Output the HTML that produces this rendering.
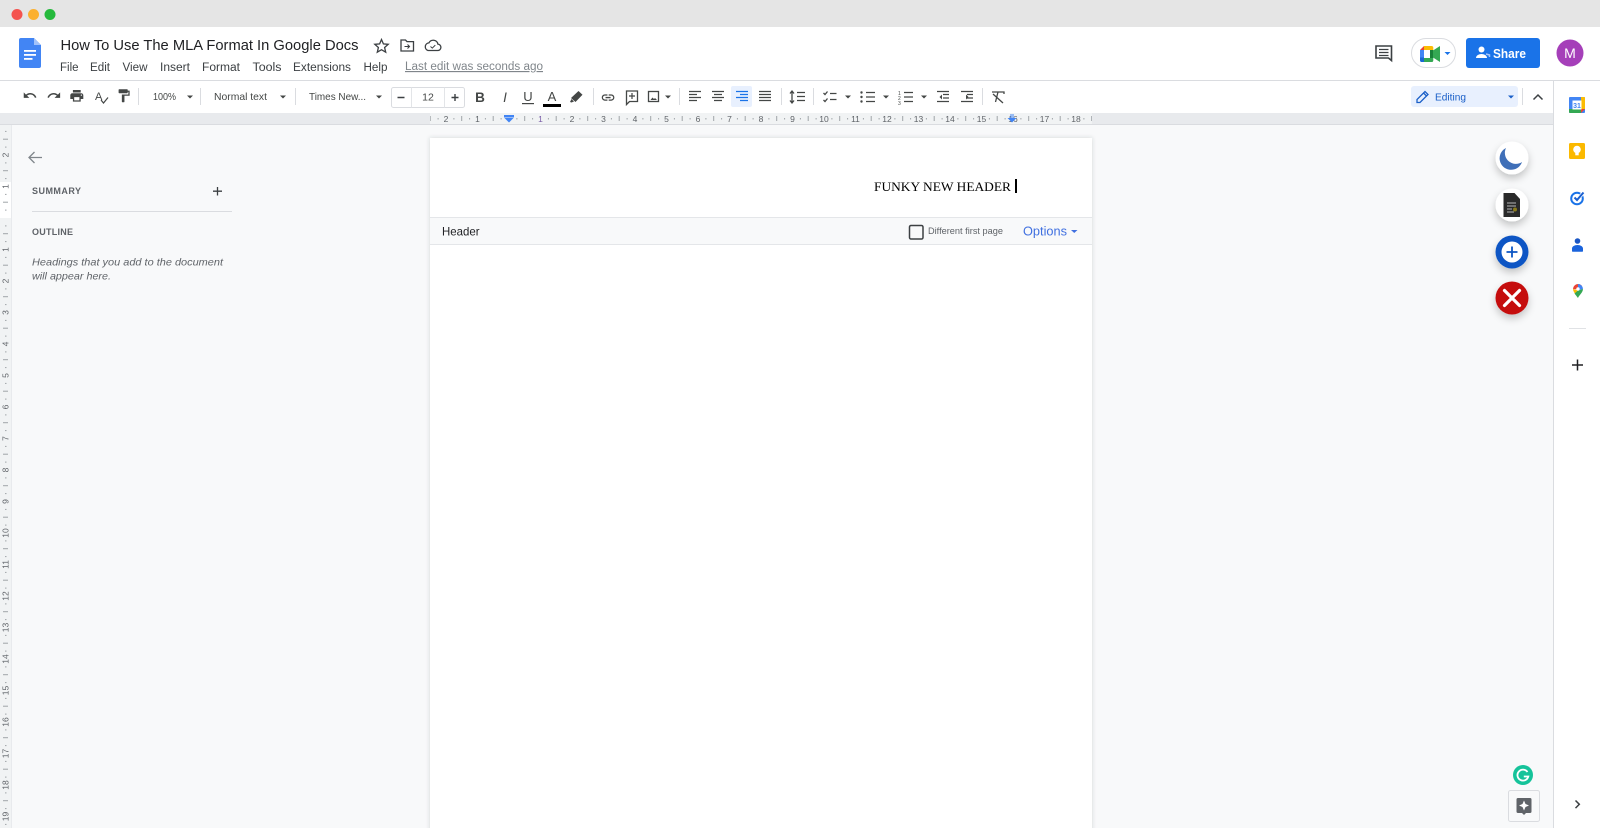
<!DOCTYPE html>
<html><head><meta charset="utf-8"><title>How To Use The MLA Format In Google Docs</title>
<style>html,body{margin:0;padding:0;background:#f8f9fa;overflow:hidden}svg{display:block;filter:blur(.3px)}text{font-family:"Liberation Sans",Arial,sans-serif}</style></head>
<body>
<svg xmlns="http://www.w3.org/2000/svg" width="1600" height="828" viewBox="0 0 1600 828">
<defs>
<filter id="s" x="-60%" y="-60%" width="220%" height="240%"><feDropShadow dx="0" dy="4" stdDeviation="4" flood-color="#000" flood-opacity=".22"/></filter>
<filter id="p" x="-3%" y="-3%" width="106%" height="106%"><feDropShadow dx="0" dy="0" stdDeviation="2" flood-color="#3c4043" flood-opacity=".2"/></filter>
<pattern id="rh" patternUnits="userSpaceOnUse" x="509" y="113" width="31.5" height="11">
<rect x="15.2" y="3" width="1" height="5" fill="#a0a4a8"/><rect x="7.4" y="5" width="1" height="1.5" fill="#a0a4a8"/><rect x="23.1" y="5" width="1" height="1.5" fill="#a0a4a8"/>
</pattern>
<pattern id="rv" patternUnits="userSpaceOnUse" x="0" y="218" width="11" height="31.5">
<rect x="3" y="15.2" width="5" height="1" fill="#a0a4a8"/><rect x="5" y="7.4" width="1.5" height="1" fill="#a0a4a8"/><rect x="5" y="23.1" width="1.5" height="1" fill="#a0a4a8"/>
</pattern>
</defs>

<rect width="1600" height="828" fill="#f8f9fa"/>
<!-- window chrome -->
<rect width="1600" height="27" fill="#e5e5e5"/>
<circle cx="17" cy="14.5" r="5.5" fill="#f4534f"/><circle cx="33.5" cy="14.5" r="5.5" fill="#fbb030"/><circle cx="50" cy="14.5" r="5.5" fill="#25b93c"/>
<!-- header -->
<rect y="27" width="1600" height="53" fill="#fff"/>
<rect y="80" width="1600" height="1" fill="#dadce0"/>
<path d="M21 38h13l7 7v21a2 2 0 0 1-2 2H21a2 2 0 0 1-2-2V40a2 2 0 0 1 2-2z" fill="#4285f4"/>
<path d="M34 38l7 7h-7z" fill="#a1c2fa"/>
<rect x="24" y="50" width="12" height="1.8" fill="#fff"/><rect x="24" y="54" width="12" height="1.8" fill="#fff"/><rect x="24" y="58" width="8.5" height="1.8" fill="#fff"/>
<text x="60.5" y="50" font-size="15" fill="#202124" textLength="298" lengthAdjust="spacingAndGlyphs">How To Use The MLA Format In Google Docs</text>
<path d="M381.5 39.5l1.9 4.4 4.8.4-3.6 3.2 1.1 4.7-4.2-2.5-4.2 2.5 1.1-4.7-3.6-3.2 4.8-.4z" fill="none" stroke="#3c4043" stroke-width="1.3"/>
<path d="M401 40h4.5l1.5 1.6h6.5v9.4H401z" fill="none" stroke="#3c4043" stroke-width="1.3"/><path d="M404.5 46.5h5M407.5 44.5l2 2-2 2" fill="none" stroke="#3c4043" stroke-width="1.1"/>
<path d="M428 50.5h9.5a3.2 3.2 0 0 0 .4-6.4 4.8 4.8 0 0 0-9-1.2 3.9 3.9 0 0 0-.9 7.6z" fill="none" stroke="#3c4043" stroke-width="1.3"/><path d="M430.5 46.5l1.8 1.6 3-3" fill="none" stroke="#3c4043" stroke-width="1"/>
<g font-size="11.5" fill="#3c4043">
<text x="60" y="71" textLength="18.5" lengthAdjust="spacingAndGlyphs">File</text>
<text x="90" y="71" textLength="20" lengthAdjust="spacingAndGlyphs">Edit</text>
<text x="122.5" y="71" textLength="25" lengthAdjust="spacingAndGlyphs">View</text>
<text x="160" y="71" textLength="30" lengthAdjust="spacingAndGlyphs">Insert</text>
<text x="202" y="71" textLength="38" lengthAdjust="spacingAndGlyphs">Format</text>
<text x="252.5" y="71" textLength="29" lengthAdjust="spacingAndGlyphs">Tools</text>
<text x="293" y="71" textLength="58" lengthAdjust="spacingAndGlyphs">Extensions</text>
<text x="363.5" y="71" textLength="24" lengthAdjust="spacingAndGlyphs">Help</text>
</g>
<text x="405" y="70" font-size="11.5" fill="#80868b" text-decoration="underline" textLength="138" lengthAdjust="spacingAndGlyphs">Last edit was seconds ago</text>
<!-- comment icon -->
<path d="M1376 46h15.5v14.5l-3-2.5H1376z" fill="none" stroke="#3c4043" stroke-width="1.6"/><path d="M1379 49.5h9.5M1379 52.5h9.5M1379 55.5h9.5" stroke="#3c4043" stroke-width="1.2"/>
<!-- meet -->
<rect x="1411.5" y="38.5" width="44" height="29" rx="14.5" fill="#fff" stroke="#dadce0"/>
<path d="M1424 46l-4 4h4z" fill="#ea4335"/><path d="M1424 46h7.5a1.8 1.8 0 0 1 1.8 1.8V50h-9.3z" fill="#fbbc04"/>
<rect x="1420" y="50" width="4" height="7.5" fill="#4285f4"/><path d="M1420 57.5h4V62h-2.2a1.8 1.8 0 0 1-1.8-1.8z" fill="#1967d2"/>
<path d="M1424 58h9.3v2.2a1.8 1.8 0 0 1-1.8 1.8H1424z" fill="#34a853"/>
<rect x="1424" y="50" width="6" height="8" fill="#fff"/>
<rect x="1430" y="50" width="3.3" height="8" fill="#188038"/><path d="M1433 50.5l7-4.5v16l-7-4.5z" fill="#34a853"/>
<path d="M1444.5 52h6l-3 3z" fill="#1a73e8"/>
<!-- share -->
<rect x="1466" y="38" width="74" height="30" rx="3" fill="#1a73e8"/>
<circle cx="1481.5" cy="49.5" r="3" fill="#fff"/><path d="M1476 58c0-2.6 3-4 5.500-4s5.500 1.400 5.500 4z" fill="#fff"/><path d="M1486 54l3.500 1v2" stroke="#a8c7fa" stroke-width="1.500" fill="none"/>
<text x="1493" y="58" font-size="12.500" font-weight="700" fill="#fff" textLength="33" lengthAdjust="spacingAndGlyphs">Share</text>
<circle cx="1570" cy="53" r="13.500" fill="#a53fb9"/><text x="1570" y="58" font-size="14" fill="#fff" text-anchor="middle">M</text>

<!-- toolbar -->
<rect y="81" width="1553" height="32" fill="#fff"/>
<g fill="#444746">
<path transform="translate(22.500 88) scale(.62)" d="M12.500 8c-2.650 0-5.050.99-6.900 2.600L2 7v9h9l-3.620-3.620c1.390-1.160 3.160-1.880 5.120-1.880 3.540 0 6.550 2.310 7.600 5.500l2.370-.78C21.080 11.030 17.150 8 12.500 8z"/>
<path transform="translate(46.500 88) scale(.62)" d="M18.400 10.600C16.550 8.990 14.150 8 11.500 8c-4.650 0-8.580 3.030-9.960 7.220L3.900 16c1.050-3.190 4.050-5.500 7.600-5.500 1.950 0 3.730.72 5.120 1.880L13 16h9V7l-3.600 3.600z"/>
<path transform="translate(69 88) scale(.65)" d="M19 8H5c-1.660 0-3 1.340-3 3v6h4v4h12v-4h4v-6c0-1.660-1.340-3-3-3zm-3 11H8v-5h8v5zm3-7c-.55 0-1-.45-1-1s.45-1 1-1 1 .45 1 1-.45 1-1 1zm-1-9H6v4h12V3z"/>
<path transform="translate(116 88) scale(.65)" d="M18 4V3c0-.55-.45-1-1-1H5c-.55 0-1 .45-1 1v4c0 .55.45 1 1 1h12c.55 0 1-.45 1-1V6h1v4H9v11c0 .55.45 1 1 1h2c.55 0 1-.45 1-1v-9h8V4h-3z"/>
</g>
<text x="95" y="100" font-size="11" fill="#444746">A</text><path d="M101 100l2.500 3 4.500-5.500" fill="none" stroke="#444746" stroke-width="1.200"/>
<g fill="#dadce0">
<rect x="138" y="88" width="1" height="17"/><rect x="200" y="88" width="1" height="17"/><rect x="295" y="88" width="1" height="17"/>
<rect x="593" y="88" width="1" height="17"/><rect x="679" y="88" width="1" height="17"/><rect x="781" y="88" width="1" height="17"/><rect x="813" y="88" width="1" height="17"/><rect x="982" y="88" width="1" height="17"/><rect x="1522" y="88" width="1" height="17"/>
</g>
<g font-size="10.500" fill="#444746">
<text x="153" y="100" textLength="23" lengthAdjust="spacingAndGlyphs">100%</text>
<text x="214" y="100" textLength="53" lengthAdjust="spacingAndGlyphs">Normal text</text>
<text x="309" y="100" textLength="57" lengthAdjust="spacingAndGlyphs">Times New...</text>
<text x="428" y="100.500" text-anchor="middle" font-size="10.500">12</text>
</g>
<g fill="#444746">
<path d="M187 95.500h6l-3 3zM280 95.500h6l-3 3zM376 95.500h6l-3 3zM665 95.500h6l-3 3zM845 95.500h6l-3 3zM883 95.500h6l-3 3zM921 95.500h6l-3 3z"/>
</g>
<rect x="391.500" y="87.500" width="73" height="20" rx="2" fill="none" stroke="#dadce0"/>
<path d="M411.500 87.500v20M444.500 87.500v20" stroke="#e3e5e8"/>
<path d="M397.500 97.500h7M451.500 97.500h7M455 94v7" stroke="#3c4043" stroke-width="1.400"/>
<text x="480" y="102" font-size="13.500" font-weight="700" fill="#444746" text-anchor="middle">B</text>
<text x="505" y="102" font-size="13.500" font-style="italic" fill="#444746" text-anchor="middle">I</text>
<text x="528" y="101" font-size="13" fill="#444746" text-anchor="middle">U</text><rect x="522" y="103" width="12" height="1.200" fill="#444746"/>
<text x="552" y="101" font-size="13" fill="#444746" text-anchor="middle">A</text><rect x="543" y="104" width="18" height="3" fill="#000"/>
<path d="M571 98l7.500-7 4 3.800-7 7.200z M570 102l1.500-3 2.500 2.500-2.500 1z" fill="#444746"/>
<path fill="#444746" transform="translate(600.500 90) scale(.63)" d="M3.900 12c0-1.710 1.390-3.100 3.100-3.100h4V7H7c-2.760 0-5 2.240-5 5s2.240 5 5 5h4v-1.900H7c-1.710 0-3.100-1.390-3.100-3.100zM8 13h8v-2H8v2zm9-6h-4v1.900h4c1.710 0 3.100 1.390 3.100 3.100s-1.390 3.100-3.100 3.100h-4V17h4c2.760 0 5-2.240 5-5s-2.240-5-5-5z"/>
<path d="M626.500 91h11v10.500h-8l-3 3z" fill="none" stroke="#444746" stroke-width="1.300"/><path d="M632 93v6M629 96h6" stroke="#444746" stroke-width="1.200"/>
<rect x="648.500" y="91.500" width="10" height="10" fill="none" stroke="#444746" stroke-width="1.300"/><path d="M650.500 100l2-2.500 1.500 1.500 1-1 2 2z" fill="#444746"/>
<g stroke="#444746" stroke-width="1.300" fill="none">
<path d="M689 91.500h12M689 94.500h8M689 97.500h12M689 100.500h8"/>
<path d="M712 91.500h12M714 94.500h8M712 97.500h12M714 100.500h8"/>
<path d="M759 91.500h12M759 94.500h12M759 97.500h12M759 100.500h12"/>
<path d="M792 91.500v11M790 93.500l2-2.500 2 2.500M790 100.500l2 2.500 2-2.500M797 92.500h8M797 96.500h8M797 100.500h8"/>
<path d="M823.500 93l1.500 1.500 2.500-3M823.500 100l1.500 1.500 2.500-3M830 93.500h6.500M830 99.500h6.500"/>
<path d="M866 92.500h9M866 97h9M866 101.500h9"/>
<path d="M904 92.500h9M904 97h9M904 101.500h9"/>
<path d="M937 91.500h12M943 94.500h6M943 98h6M937 101.500h12"/>
<path d="M961 91.500h12M967 94.500h6M967 98h6M961 101.500h12"/>
<path d="M992 92h12v2M998 92l-2.500 10M993 94l10 9"/>
</g>
<rect x="731" y="86" width="21" height="21" rx="2" fill="#e8f0fe"/>
<path d="M736 91.500h12M740 94.500h8M736 97.500h12M740 100.500h8" stroke="#1a73e8" stroke-width="1.300" fill="none"/>
<g fill="#444746"><circle cx="861.500" cy="92.500" r="1.200"/><circle cx="861.500" cy="97" r="1.200"/><circle cx="861.500" cy="101.500" r="1.200"/>
<path d="M937 94.500v5l-2.500-2.500zM961 94.500v5l2.500-2.500z" transform="translate(5 0)"/></g>
<text x="898" y="95" font-size="5" fill="#444746">1</text><text x="898" y="100" font-size="5" fill="#444746">2</text><text x="898" y="105" font-size="5" fill="#444746">3</text>
<!-- editing -->
<rect x="1411" y="86" width="107" height="21" rx="3" fill="#e8f0fe"/>
<path d="M1417 102.500v-3l8-8 3 3-8 8zM1423.500 93l3 3" fill="none" stroke="#1a5fc8" stroke-width="1.300"/>
<text x="1435" y="100.500" font-size="10.500" fill="#1a5fc8" textLength="31" lengthAdjust="spacingAndGlyphs">Editing</text>
<path d="M1508 95.500h6l-3 3z" fill="#1a5fc8"/>
<path d="M1533.500 99.500l4.500-4.500 4.500 4.500" fill="none" stroke="#3c4043" stroke-width="1.500"/>

<!-- horizontal ruler -->
<rect y="113" width="1553" height="11" fill="#e8eaed"/>
<rect x="430" y="113" width="662" height="11" fill="#f1f3f4"/>
<rect x="430" y="113" width="662" height="11" fill="url(#rh)"/>
<rect y="124" width="1553" height="1" fill="#dadce0"/>
<g font-size="8.500" fill="#5f6368" text-anchor="middle">
<text x="446" y="122">2</text><text x="477.500" y="122">1</text><text x="540.500" y="122" fill="#7a5ea8">1</text><text x="572" y="122">2</text><text x="603.500" y="122">3</text><text x="635" y="122">4</text><text x="666.500" y="122">5</text><text x="698" y="122">6</text><text x="729.500" y="122">7</text><text x="761" y="122">8</text><text x="792.500" y="122">9</text><text x="824" y="122">10</text><text x="855.500" y="122">11</text><text x="887" y="122">12</text><text x="918.500" y="122">13</text><text x="950" y="122">14</text><text x="981.500" y="122">15</text><text x="1013" y="122">16</text><text x="1044.500" y="122">17</text><text x="1076" y="122">18</text>
</g>
<path d="M504 115h10v2.500h-10zM504.500 118h9l-4.500 4.500z" fill="#4285f4"/>
<path d="M1007.500 118h9l-4.500 4.500z" fill="#4285f4"/><rect x="1010" y="114" width="4" height="4" fill="#4285f4" opacity=".5"/>

<!-- vertical ruler -->
<rect y="125" width="11" height="703" fill="#f1f3f4"/>
<rect y="182" width="11" height="36" fill="#fff"/>
<rect y="125" width="11" height="703" fill="url(#rv)"/>
<rect x="11" y="125" width="1" height="703" fill="#e8eaed"/>
<g font-size="8.500" fill="#5f6368" text-anchor="middle">
<text transform="translate(8.500 155) rotate(-90)">2</text><text transform="translate(8.500 186.500) rotate(-90)">1</text><text transform="translate(8.500 249.500) rotate(-90)">1</text><text transform="translate(8.500 281) rotate(-90)">2</text><text transform="translate(8.500 312.500) rotate(-90)">3</text><text transform="translate(8.500 344) rotate(-90)">4</text><text transform="translate(8.500 375.500) rotate(-90)">5</text><text transform="translate(8.500 407) rotate(-90)">6</text><text transform="translate(8.500 438.500) rotate(-90)">7</text><text transform="translate(8.500 470) rotate(-90)">8</text><text transform="translate(8.500 501.500) rotate(-90)">9</text><text transform="translate(8.500 533) rotate(-90)">10</text><text transform="translate(8.500 564.500) rotate(-90)">11</text><text transform="translate(8.500 596) rotate(-90)">12</text><text transform="translate(8.500 627.500) rotate(-90)">13</text><text transform="translate(8.500 659) rotate(-90)">14</text><text transform="translate(8.500 690.500) rotate(-90)">15</text><text transform="translate(8.500 722) rotate(-90)">16</text><text transform="translate(8.500 753.500) rotate(-90)">17</text><text transform="translate(8.500 785) rotate(-90)">18</text><text transform="translate(8.500 816.500) rotate(-90)">19</text>
</g>

<!-- outline panel -->
<path d="M42 157.500H29M34.500 152l-5.500 5.500 5.500 5.500" fill="none" stroke="#80868b" stroke-width="1.300"/>
<text x="32" y="194" font-size="9" font-weight="700" fill="#5f6368" textLength="49">SUMMARY</text>
<path d="M217.500 187v8.500M213 191.200h9" stroke="#3c4043" stroke-width="1.300"/>
<rect x="32" y="211" width="200" height="1" fill="#dadce0"/>
<text x="32" y="235" font-size="9" font-weight="700" fill="#5f6368" textLength="41">OUTLINE</text>
<text x="32" y="265.500" font-size="10.500" font-style="italic" fill="#5f6368" textLength="191" lengthAdjust="spacingAndGlyphs">Headings that you add to the document</text>
<text x="32" y="279.500" font-size="10.500" font-style="italic" fill="#5f6368" textLength="79" lengthAdjust="spacingAndGlyphs">will appear here.</text>

<!-- page -->
<rect x="430" y="138" width="662" height="700" fill="#fff" filter="url(#p)"/>
<rect x="430" y="218" width="662" height="26" fill="#f8f9fa"/>
<path d="M430 217.500h662M430 244.500h662" stroke="#e4e6e9"/>
<text x="874" y="191" font-size="13" fill="#000" style="font-family:'Liberation Serif',serif" textLength="137" lengthAdjust="spacingAndGlyphs">FUNKY NEW HEADER</text>
<rect x="1015" y="179" width="2" height="14" fill="#000"/>
<text x="442" y="235.500" font-size="12" fill="#202124" textLength="37.500" lengthAdjust="spacingAndGlyphs">Header</text>
<rect x="909.500" y="225.500" width="13.500" height="13.500" rx="1.500" fill="none" stroke="#3c4043" stroke-width="1.500"/>
<text x="928" y="234" font-size="9" fill="#5f6368" textLength="75" lengthAdjust="spacingAndGlyphs">Different first page</text>
<text x="1023" y="235.500" font-size="12.500" fill="#4070e0" textLength="44" lengthAdjust="spacingAndGlyphs">Options</text>
<path d="M1071 230h6.500l-3.250 3z" fill="#4070e0"/>

<!-- floating buttons -->
<circle cx="1512" cy="158" r="16.500" fill="#fff" filter="url(#s)"/>
<path d="M1506 148A11.500 11.500 0 1 0 1522 162A11 11 0 0 1 1506 148z" fill="#3f6fb8"/>
<circle cx="1512" cy="205" r="16.500" fill="#fff" filter="url(#s)"/>
<path d="M1503.500 193h11l5.500 6v18h-16.500z" fill="#2a2a2a"/>
<path d="M1507 203h9M1507 206h9M1507 209h5M1507 212h7" stroke="#9a9a9a" stroke-width="1.200"/><circle cx="1515" cy="209.500" r="2" fill="#8a7a1a"/>
<circle cx="1512" cy="252" r="16.500" fill="#0b55c4" filter="url(#s)"/>
<circle cx="1512" cy="252" r="10.500" fill="#fff"/><path d="M1512 246.500v11M1506.500 252h11" stroke="#0b55c4" stroke-width="1.800"/>
<circle cx="1512" cy="298" r="16.500" fill="#c50f0f" filter="url(#s)"/>
<path d="M1504.500 290.500l15 15M1519.500 290.500l-15 15" stroke="#fff" stroke-width="3.200" stroke-linecap="round"/>
<circle cx="1523" cy="775" r="10" fill="#15c39a"/>
<path d="M1527.500 772a5.500 5.500 0 1 0 .8 4.500h-4.500" fill="none" stroke="#fff" stroke-width="1.800"/>
<rect x="1508.500" y="790.500" width="31" height="31" rx="2" fill="#f8f9fa" stroke="#dadce0"/>
<path d="M1518 798h12a1.500 1.500 0 0 1 1.500 1.500v12a1.500 1.500 0 0 1-1.500 1.500h-4l-2 2-2-2h-4a1.500 1.500 0 0 1-1.500-1.500v-12a1.500 1.500 0 0 1 1.500-1.500z" fill="#5f6368"/>
<path d="M1524 800.500l1.500 3.500 3.500 1.500-3.500 1.500-1.500 3.500-1.500-3.500-3.500-1.500 3.500-1.500z" fill="#fff"/>

<!-- side panel -->
<rect x="1553" y="81" width="47" height="747" fill="#fff"/><rect x="1553" y="81" width="1" height="747" fill="#dadce0"/>
<rect x="1569" y="97" width="16" height="16" rx="1" fill="#4285f4"/>
<path d="M1581 97h3a1 1 0 0 1 1 1v11h-4z" fill="#fbbc04"/><path d="M1569 109h12v4h-11a1 1 0 0 1-1-1z" fill="#34a853"/><path d="M1581 109h4l-4 4z" fill="#ea4335"/>
<rect x="1572.500" y="100.500" width="9" height="9" fill="#fff"/><text x="1577" y="108" font-size="7" font-weight="700" fill="#4285f4" text-anchor="middle">31</text>
<rect x="1569" y="143" width="16" height="16" rx="1.500" fill="#fbb900"/>
<circle cx="1577" cy="149.500" r="3.800" fill="#fff"/><rect x="1575.300" y="152.500" width="3.400" height="2.800" fill="#fff"/>
<circle cx="1577" cy="198.500" r="5.800" fill="none" stroke="#1a73e8" stroke-width="2"/>
<path d="M1574.500 197.500l2.500 2.500 6.500-7.500" fill="none" stroke="#fff" stroke-width="3.500"/>
<path d="M1574.500 197.500l2.500 2.500 6.500-7.500" fill="none" stroke="#1a5fd0" stroke-width="2"/>
<circle cx="1577.500" cy="241" r="2.800" fill="#1a56c4"/><path d="M1572 251v-2.500c0-2 2.500-3.500 5.500-3.500s5.500 1.500 5.500 3.500v2.500a.8.8 0 0 1-.8.8h-9.400a.8.8 0 0 1-.8-.8z" fill="#1a63dc"/>
<path d="M1578 298c-.8-2.500-5-5.500-5-9l5 1.500z" fill="#fbbc04"/>
<path d="M1573 289a5 5 0 0 1 1.500-3.500l3.500 4z" fill="#ea4335"/>
<path d="M1574.500 285.500a5 5 0 0 1 3.500-1.500 5 5 0 0 1 4 2l-4 4.500z" fill="#ea4335"/>
<path d="M1578 284a5 5 0 0 1 5 5l-5 1.500z" fill="#4285f4"/>
<path d="M1578 298c.8-2.500 5-5.500 5-9l-5 1.500-3.500 3z" fill="#34a853"/><circle cx="1578" cy="289" r="1.700" fill="#fff"/>
<rect x="1569" y="328" width="17" height="1" fill="#e0e2e5"/>
<path d="M1577.500 359.500v11M1572 365h11" stroke="#202124" stroke-width="1.500"/>
<path d="M1575.500 800.500l3.800 3.800-3.800 3.800" fill="none" stroke="#3c4043" stroke-width="1.500"/>
</svg>
</body></html>
